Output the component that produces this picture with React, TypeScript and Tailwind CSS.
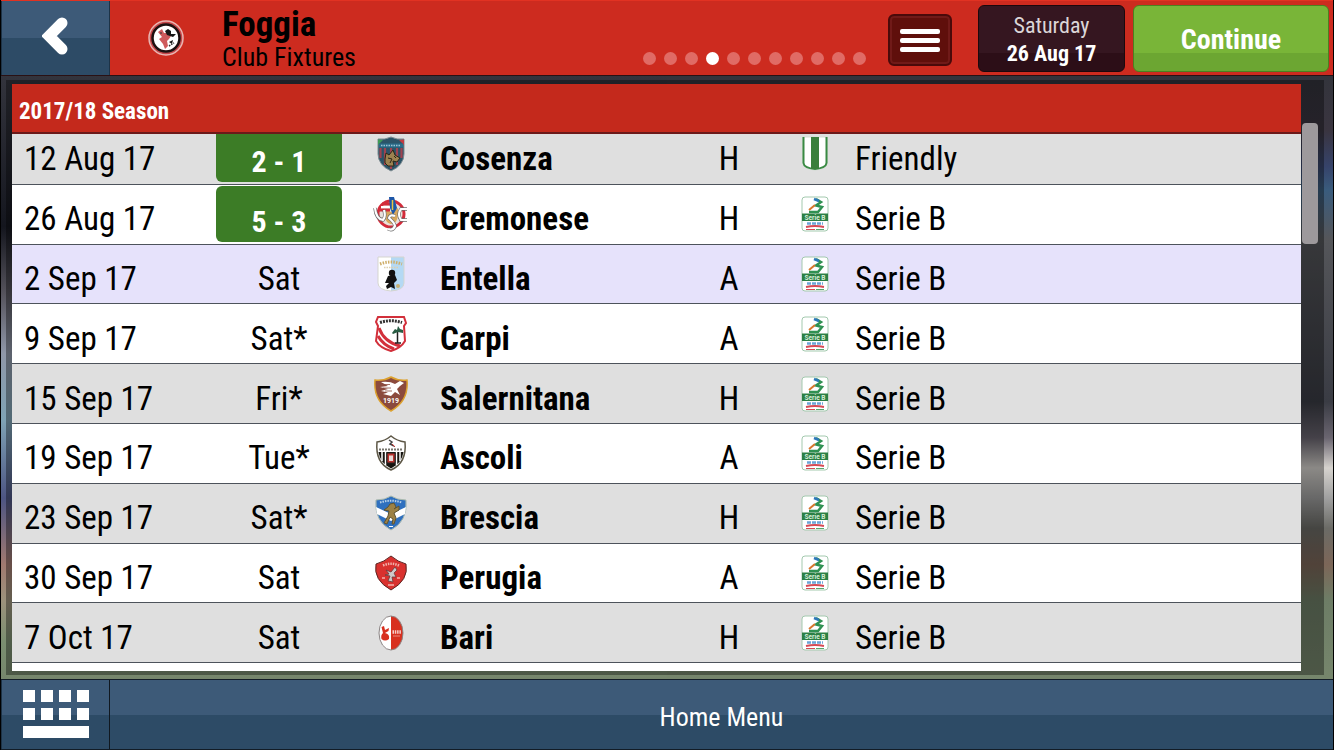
import React from 'react';

type Fixture = {
  date: string;
  day?: string;
  score?: string;
  club: string;
  venue: string;
  competition: string;
  crest: React.ReactNode;
};

const Crest = ({ children }: { children: React.ReactNode }) => (
  <svg viewBox="0 0 36 36" className="w-9 h-9 mx-auto block" aria-hidden="true">
    {children}
  </svg>
);

const Cosenza = () => (
  <Crest>
    <path d="M5 3 Q12 4 18 1 Q24 4 31 3 V18 Q31 29 18 35 Q5 29 5 18Z" fill="#2b5468" stroke="#7d8b91" />
    <path d="M7.500 12V22M12 12V29M18 12V33M24 12V29M28.500 12V22" stroke="#a04350" strokeWidth="2.200" />
    <path d="M5 3.500 L10 4 L5 9Z" fill="#3f9a56" />
    <path d="M31 3.500 L26 4 L31 9Z" fill="#c23b42" />
    <path d="M6 7.500H30V11.500H6Z" fill="#2a6d8a" />
    <path d="M8 9.500H28" stroke="#9cc3d2" strokeWidth="1.500" strokeDasharray="1.500 1" />
    <path d="M12 23 L13 17 L16 19 L20 14 L22 19 L27 22 L24 26 L20 25 L21 30 L15 30 L12 27Z" fill="#9c8250" stroke="#2a2618" />
    <path d="M15 22 L19 23 L17 27M21 20L23 22" stroke="#2a2618" fill="none" />
  </Crest>
);

const Cremonese = () => (
  <Crest>
    <circle cx="18" cy="18" r="13" fill="#e9e1da" stroke="#d32b3a" strokeWidth="3" />
    <path d="M11 13 Q11 27 18 28 Q26 28 25 12 L18 16Z" fill="#d8a85e" />
    <path d="M9 8H18M6 14H17" stroke="#d32b3a" strokeWidth="3" />
    <path d="M8 11H17" stroke="#fff" strokeWidth="2" />
    <path d="M16 1 H21 L24 12 L20 19 L17 12Z" fill="#1d57a8" />
    <path d="M19.500 4V14" stroke="#e6c545" strokeWidth="1.500" />
    <path d="M2 12 Q3 23 10 24 Q13 21 11 14M22 20 Q17 18 16 22 Q21 26 22 30 Q20 35 15 33M34 13 H28 Q24 18 28 24 H34" stroke="#6d6d6d" strokeWidth="3.500" fill="none" />
    <path d="M2 12 Q3 23 10 24 Q13 21 11 14M22 20 Q17 18 16 22 Q21 26 22 30 Q20 35 15 33M34 13 H28 Q24 18 28 24 H34" stroke="#fff" strokeWidth="2.200" fill="none" />
  </Crest>
);

const Entella = () => (
  <Crest>
    <path d="M5 1H18V35Q5 34 5 27Z" fill="#fff" />
    <path d="M18 1H31V27Q31 34 18 35Z" fill="#b4d9f4" />
    <path d="M5 1H31V27Q31 34 18 35Q5 34 5 27Z" fill="none" stroke="#d5d5cf" />
    <path d="M7 8 Q18 4 29 8" fill="none" stroke="#cfae6a" strokeWidth="3" strokeDasharray="1.500 1.200" />
    <path d="M11 11.500H25" stroke="#ddcfae" strokeWidth="1.500" strokeDasharray="1.500 1" />
    <circle cx="19" cy="17" r="3.200" fill="#111" />
    <path d="M15 20 L22 19 L24 24 L21 27 L22 33 L18 31 L14 33 L13 30 L16 27 L12 27Z" fill="#111" />
    <circle cx="25" cy="30" r="2" fill="#c7b274" />
  </Crest>
);

const Carpi = () => (
  <Crest>
    <path d="M5 1H31L33 7L31 10L32 25Q28 32 18 35Q7 32 3 25L5 10L3 6Z" fill="#fff" stroke="#d2303b" strokeWidth="2" />
    <path d="M6 12Q11 26 27 30M5 20Q10 29 21 33" stroke="#d2303b" strokeWidth="3" fill="none" />
    <path d="M7 6.500Q18 3 29 6.500" stroke="#333" strokeWidth="3" strokeDasharray="2 1" fill="none" />
    <path d="M24.500 14V27M22 27H28" stroke="#222" strokeWidth="1.500" />
    <path d="M19 17 L22 13 L24 14 L25 10 L27 13 L30 14 L30 17 L25 16 L20 18Z" fill="#285d43" />
  </Crest>
);

const Salernitana = () => (
  <Crest>
    <path d="M2 4Q11 5 18 1Q25 5 34 4Q36 25 18 35Q0 25 2 4Z" fill="#8b4a3d" stroke="#dca12e" strokeWidth="1.500" />
    <path d="M8 6 Q17 5 22 8 L27 5 L31 7 L27 10 L24 13 L27 19 L22 16 L18 20 L10 18 L15 16.500 L8 15 L15 13 L7 11 L15 10Z" fill="#fff" />
    <path d="M9 8.500H17M10 12H18M12 15H19" stroke="#8b4a3d" strokeWidth="0.800" />
    <text x="18" y="27" textAnchor="middle" fontSize="7" fontWeight="700" fill="#fff" className="font-[Roboto]">1919</text>
  </Crest>
);

const Ascoli = () => (
  <Crest>
    <path d="M18 1Q24 6 32 7Q34 28 18 35Q2 28 4 7Q12 6 18 1Z" fill="#fff" stroke="#5d5746" strokeWidth="1.500" />
    <path d="M5.500 17H30.500Q29 28 18 33.500Q7 28 5.500 17Z" fill="#16140f" />
    <path d="M9 17V26M12.500 17V30M23.500 17V30M27 17V26" stroke="#fff" strokeWidth="1.500" />
    <path d="M14 18H22V28H14Z" fill="#b9322d" stroke="#222" />
    <path d="M16 20.500H20V26H16Z" fill="#e7d9d6" />
    <path d="M6 14.500H30" stroke="#77756c" strokeWidth="2" strokeDasharray="2 1" />
    <path d="M16 5 L19 7 L17 9 L21 11" stroke="#444" strokeWidth="1.500" fill="none" />
    <path d="M19 9L22 12" stroke="#c5342f" />
  </Crest>
);

const Brescia = () => (
  <Crest>
    <path d="M3 5Q12 5 18 1Q24 5 33 5Q35 26 18 35Q1 26 3 5Z" fill="#2f70bf" stroke="#a9b9ae" />
    <path d="M3 12L18 19L33 12L32 19L18 26L4 19Z" fill="#fff" />
    <path d="M7 7.500Q18 4 29 7.500" stroke="#b6d0ea" strokeWidth="2" strokeDasharray="1.500 1" fill="none" />
    <path d="M17 9 L21 8 L23 12 L21 14 L26 11 L26 15 L21 18 L23 23 L21 29 L19 29 L20 24 L17 22 L14 29 L11 28 L15 21 L16 16 L11 15 L15 12Z" fill="#9c8145" stroke="#5f5433" />
    <path d="M16 31.500H20" stroke="#fff" />
  </Crest>
);

const Perugia = () => (
  <Crest>
    <path d="M18 1Q25 7 33 9Q36 25 18 35Q0 25 3 9Q11 7 18 1Z" fill="#d9312e" stroke="#5b2522" />
    <path d="M10 10.500Q18 7 26 10.500" stroke="#f2b0aa" strokeWidth="2.500" strokeDasharray="1.500 1" fill="none" />
    <path d="M13 15 L18 17 L22 12 L24 15 L21 18 L23 22 L19 22 L20 27 L15 26 L17 21 L12 20 L16 19Z" fill="#cfcaca" stroke="#6a3a3a" strokeWidth="0.800" />
    <path d="M9 23H12M24 23H27M15 30H21" stroke="#f2b0aa" strokeWidth="1.500" />
  </Crest>
);

const Bari = () => (
  <Crest>
    <ellipse cx="18" cy="18" rx="12" ry="17" fill="#fff" />
    <path d="M18 1A12 17 0 0 1 18 35Z" fill="#d8301f" />
    <ellipse cx="18" cy="18" rx="12" ry="17" fill="none" stroke="#8b8484" />
    <path d="M8.500 12 L11 11 L12 15 L16 13 L15.500 16 L12 18 Q17 19 16 24 Q12 27 8.500 24 Q7.500 20 10 18Z" fill="#d8301f" />
    <path d="M19.500 17H28" stroke="#f7cfca" strokeWidth="3.500" strokeDasharray="1.500 0.800" />
    <path d="M20 21H27" stroke="#e98b82" />
  </Crest>
);

const Friendly = () => (
  <Crest>
    <path d="M5.500 1V27Q6 33 18 34Q30 33 30.500 27V1Z" fill="#fff" stroke="#d3dcd3" />
    <path d="M6.500 1V27Q7 32 18 33Q29 32 29.500 27V1" fill="none" stroke="#3a8a44" strokeWidth="2" />
    <path d="M14 1H22V33H14Z" fill="#3a7f3c" />
  </Crest>
);

const SerieB = () => (
  <Crest>
    <path d="M8 1H28Q31 1 31 4V32Q31 35 28 35H8Q5 35 5 32V4Q5 1 8 1Z" fill="#fff" stroke="#a3c9ae" />
    <path d="M19 3L24 6L19 9.500L25 11L21 16H12" stroke="#2f9152" strokeWidth="2.500" fill="none" />
    <path d="M17 3L22 5" stroke="#2d78b8" strokeWidth="2.500" />
    <path d="M18 9L12 14" stroke="#d8772f" strokeWidth="2" />
    <path d="M5 17.500H31V25H5Z" fill="#2c8045" />
    <text x="18" y="23.500" textAnchor="middle" fontSize="6.500" fontWeight="700" fill="#d5efd9" className="font-[Roboto]">Serie B</text>
    <path d="M10 27.500H26" stroke="#6aa5d8" strokeWidth="2.500" strokeDasharray="4 1" />
    <path d="M9 31Q18 29 27 31" stroke="#d54a55" strokeWidth="2" fill="none" />
    <path d="M9 33.500H18" stroke="#d54a55" />
    <path d="M19 33.500H27" stroke="#58a56d" />
  </Crest>
);

const FoggiaBadge = () => (
  <svg viewBox="0 0 36 36" className="w-9 h-9" aria-hidden="true">
    <circle cx="18" cy="18" r="17" fill="#c6474a" stroke="#e9b5b2" strokeWidth="1.500" />
    <circle cx="18" cy="18" r="13.500" fill="#fff" stroke="#1c1010" strokeWidth="2.500" />
    <path d="M10 12 L14 9 L16 13 L20 13 L23 16 L21 19 L19 21 L20 26 L17 29 L15 24 L11 19 L14 17Z" fill="#cf5a5c" />
    <path d="M17 11 L20 9 L23 11 L23 14 L28 14 L25 17 L19 15ZM22 20H28M21 22 L25 20 L24 24" fill="#161616" />
    <path d="M21 26L26 23" stroke="#333" strokeWidth="1.500" strokeDasharray="1.500 1" />
    <path d="M13 12V14" stroke="#333" />
  </svg>
);

const fixtures: Fixture[] = [
  { date: '12 Aug 17', score: '2 - 1', club: 'Cosenza', venue: 'H', competition: 'Friendly', crest: <Cosenza /> },
  { date: '26 Aug 17', score: '5 - 3', club: 'Cremonese', venue: 'H', competition: 'Serie B', crest: <Cremonese /> },
  { date: '2 Sep 17', day: 'Sat', club: 'Entella', venue: 'A', competition: 'Serie B', crest: <Entella /> },
  { date: '9 Sep 17', day: 'Sat*', club: 'Carpi', venue: 'A', competition: 'Serie B', crest: <Carpi /> },
  { date: '15 Sep 17', day: 'Fri*', club: 'Salernitana', venue: 'H', competition: 'Serie B', crest: <Salernitana /> },
  { date: '19 Sep 17', day: 'Tue*', club: 'Ascoli', venue: 'A', competition: 'Serie B', crest: <Ascoli /> },
  { date: '23 Sep 17', day: 'Sat*', club: 'Brescia', venue: 'H', competition: 'Serie B', crest: <Brescia /> },
  { date: '30 Sep 17', day: 'Sat', club: 'Perugia', venue: 'A', competition: 'Serie B', crest: <Perugia /> },
  { date: '7 Oct 17', day: 'Sat', club: 'Bari', venue: 'H', competition: 'Serie B', crest: <Bari /> },
];

const Header = () => (
  <header className="flex h-[76px] shrink-0 bg-[#cd2b1f] border-t border-t-[#e23222] border-b border-b-[#2a1114]">
    <button
      aria-label="Back"
      className="flex w-[109px] items-center justify-center border-l border-r border-[#1d3347] bg-linear-to-b from-[#3d5a78] from-50% to-[#2d4b66] to-50% pb-1"
    >
      <svg viewBox="0 0 28 40" className="w-7 h-10" aria-hidden="true">
        <path d="M20 7L7 20L20 33" stroke="#fff" strokeWidth="11" strokeLinecap="round" fill="none" />
      </svg>
    </button>
    <div className="flex w-28 items-center justify-center">
      <FoggiaBadge />
    </div>
    <div className="flex flex-col pt-1">
      <h1 className="text-[35px] leading-10 font-bold">Foggia</h1>
      <p className="text-[26px] leading-6">Club Fixtures</p>
    </div>
    <div className="ml-auto flex gap-2 pr-1">
      <div className="flex items-end gap-2 pb-2.5 pr-3.5">
        {Array.from({ length: 11 }, (_, index) => (
          <span
            key={index}
            className={
              index === 3
                ? 'w-[13px] h-[13px] rounded-full bg-white'
                : 'w-[13px] h-[13px] rounded-full bg-[#e06b65]'
            }
          />
        ))}
      </div>
      <button
        aria-label="Menu"
        className="mt-[13px] mr-[18px] flex h-[52px] w-16 flex-col items-center justify-center gap-1 rounded-md border-2 border-[#4a0a0a] bg-[#5f0f0b] shadow-[inset_0_0_0_2px_#701a18]"
      >
        <span className="h-[5px] w-10 rounded-xs bg-white" />
        <span className="h-[5px] w-10 rounded-xs bg-white" />
        <span className="h-[5px] w-10 rounded-xs bg-white" />
      </button>
      <div className="mt-1 flex h-[67px] w-[147px] flex-col items-center justify-center rounded-md border border-[#1c080d] bg-linear-to-b from-[#351620] from-73% to-[#2c0e17] to-73% pt-0.5 text-[22px] leading-7 text-white">
        <span className="text-[#dcd6d8]">Saturday</span>
        <span className="font-bold">26 Aug 17</span>
      </div>
      <button className="mt-1 h-[67px] w-[196px] rounded-md border border-[#4c8120] bg-linear-to-b from-[#79b538] from-73% to-[#6ca632] to-73% pt-0.5 text-[28px] font-bold text-white">
        Continue
      </button>
    </div>
  </header>
);

const FixtureTable = () => {
  const list = React.useRef<HTMLDivElement>(null);

  React.useLayoutEffect(() => {
    if (list.current) list.current.scrollTop = 9;
  }, []);

  return (
    <div ref={list} className="min-h-0 flex-1 overflow-hidden">
      <table className="h-[598px] w-full table-fixed border-separate border-spacing-0 text-[33px] leading-10">
        <colgroup>
          <col className="w-[204px]" />
          <col className="w-[126px]" />
          <col className="w-[98px]" />
          <col className="w-60" />
          <col className="w-[98px]" />
          <col className="w-[74px]" />
          <col />
        </colgroup>
        <tbody className="[&_td]:border-b [&_td]:border-[#4d535b] [&_td]:p-0">
          {fixtures.map((item, index) => (
            <tr
              key={item.date}
              className={
                index === 2
                  ? 'h-[59px] bg-[#e6e2fb]'
                  : index === 0 || (index > 3 && index % 2 === 0)
                    ? 'h-[59px] bg-[#dfdfdf]'
                    : 'h-[59px] bg-white'
              }
            >
              <td><div className="pt-2.5 pl-3">{item.date}</div></td>
              <td className="text-center">
                {item.score ? (
                  <div className="h-14 rounded-md bg-[#3c7c26] pt-4 text-[30px] font-bold text-white">{item.score}</div>
                ) : (
                  <div className="pt-2.5">{item.day}</div>
                )}
              </td>
              <td>{item.crest}</td>
              <td className="font-bold"><div className="pt-2.5">{item.club}</div></td>
              <td className="text-center"><div className="pt-2.5">{item.venue}</div></td>
              <td>{item.competition === 'Friendly' ? <Friendly /> : <SerieB />}</td>
              <td><div className="pt-2.5 pl-[3px]">{item.competition}</div></td>
            </tr>
          ))}
          <tr className="h-[59px] bg-white">
            <td colSpan={7} />
          </tr>
        </tbody>
      </table>
    </div>
  );
};

const Footer = () => (
  <footer className="flex h-[71px] shrink-0 border-y border-[#121c26] bg-[#101820]">
    <button
      aria-label="Keyboard"
      className="flex w-[109px] items-center justify-center border-l border-l-[#1d3347] border-r border-r-[#101820] bg-linear-to-b from-[#3d5a78] from-50% to-[#2d4b66] to-50% pb-0.5"
    >
      <svg viewBox="0 0 66 48" className="w-[66px] h-12" fill="#fff" aria-hidden="true">
        {[0, 18, 36, 54].map((x) => (
          <g key={x}>
            <rect x={x} y="0" width="12" height="12" />
            <rect x={x} y="18" width="12" height="12" />
          </g>
        ))}
        <rect x="0" y="36" width="66" height="12" />
      </svg>
    </button>
    <button className="flex-1 bg-linear-to-b from-[#3d5a78] from-50% to-[#2d4b66] to-50% pt-1.5 text-[26px] text-white">
      Home Menu
    </button>
  </footer>
);

const App = () => (
  <div className="flex h-screen flex-col border-x border-black bg-[#2b2c34] font-['Roboto_Condensed','Roboto',sans-serif] text-black">
    <Header />
    {/* out-of-focus stadium: one strip of light down each side */}
    <main className="flex min-h-0 flex-1 bg-no-repeat [background-image:linear-gradient(#33343d,#14161e_25%,#55535c_36%,#8f97a8_46%,#7fa3b5_57%,#4d5583_70%,#a07a70_81%,#9c927c_87%,#7a8f70_94%,#76866c),linear-gradient(#33343c,#3a3540_9%,#36436a_15%,#3a5c7d_19%,#55565a_27%,#3a3c44_54%,#6a6570_60%,#d6d3ce_65%,#a0a0a0_70%,#6b6b66_75%,#7c6658_81%,#6d7d66_87%,#76866c)] [background-position:left,right] [background-size:50%_100%] py-1 pr-[9px] pl-[5px]">
      <div className="flex min-w-0 flex-1 bg-black/35 pt-1 pb-1 pl-1.5">
        <section className="flex min-w-0 flex-1 flex-col bg-white">
          <h2 className="flex h-[50px] shrink-0 items-center border-b-2 border-[#6b1a1a] bg-[#c4291c] pt-2 pl-[7px] text-[23px] font-bold text-white">
            2017/18 Season
          </h2>
          <FixtureTable />
        </section>
        <div className="w-[23px] pt-[39px]">
          <div className="ml-px h-[121px] w-4 rounded-sm bg-[#9d999c]" />
        </div>
      </div>
    </main>
    <Footer />
  </div>
);

export default App;
